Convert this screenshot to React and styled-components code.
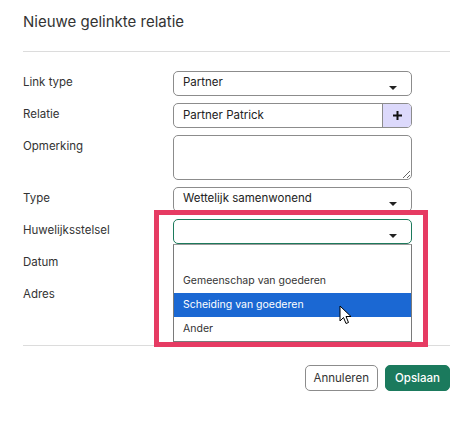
import React from 'react'
import styled, { createGlobalStyle } from 'styled-components'

const Global = createGlobalStyle`
  body {
    margin: 0;
    background: #fff;
    font-family: Inter, "Noto Sans", Arial, sans-serif;
    color: #333;
  }
`

const Dialog = styled.div`
  width: 475px;
  height: 428px;
  padding: 0 25px 0 23px;
  box-sizing: border-box;
`

const Header = styled.div`
  height: 51px;
  display: flex;
  align-items: center;
  border-bottom: 1px solid #dcdcdc;
  h1 {
    margin: 0 0 8px;
    font-size: 15px;
    font-weight: 400;
    color: #333;
  }
`

const Form = styled.div`
  display: grid;
  grid-template-columns: 150px 239px;
  row-gap: 7px;
  padding: 19px 0 37px;
  border-bottom: 1px solid #dcdcdc;
`

const Label = styled.div`
  font-size: 11.5px;
  line-height: 22px;
  color: #333;
`

const Field = styled.div`
  position: relative;
`

const SelectBox = styled.div`
  height: 25px;
  box-sizing: border-box;
  border: 1px solid ${p => (p.$focus ? '#1d7a5c' : '#8c8c8c')};
  border-radius: 5px;
  padding: 0 0 0 9px;
  font-size: 11.5px;
  line-height: 20px;
  color: #222;
  position: relative;
  &::after {
    content: '';
    position: absolute;
    right: 14px;
    top: 14px;
    border-left: 4px solid transparent;
    border-right: 4px solid transparent;
    border-top: 4px solid #222;
  }
`

const InputGroup = styled.div`
  display: flex;
  height: 25px;
  box-sizing: border-box;
  border: 1px solid #8c8c8c;
  border-radius: 5px;
  overflow: hidden;
`

const TextInput = styled.div`
  flex: 1;
  padding-left: 9px;
  font-size: 11.5px;
  line-height: 23px;
  color: #222;
`

const AddButton = styled.div`
  width: 28px;
  background: #dcd9fb;
  border-left: 1px solid #8c8c8c;
  display: flex;
  align-items: center;
  justify-content: center;
`

const TextArea = styled.textarea`
  display: block;
  width: 239px;
  height: 45px;
  box-sizing: border-box;
  border: 1px solid #8c8c8c;
  border-radius: 5px;
  margin: 0;
  resize: vertical;
  font-family: inherit;
`

const Empty = styled.div`
  height: 25px;
`

const List = styled.div`
  position: absolute;
  top: 25px;
  left: 0;
  width: 239px;
  box-sizing: border-box;
  border: 1px solid #7a7a7a;
  border-top-color: #9a9a9a;
  background: #fff;
  padding-top: 24px;
  z-index: 2;
`

const Option = styled.div`
  height: 24px;
  line-height: 24px;
  padding-left: 9px;
  font-size: 10.5px;
  background: ${p => (p.$active ? '#1b68d3' : '#fff')};
  color: ${p => (p.$active ? '#fff' : '#333')};
`

const Highlight = styled.div`
  position: absolute;
  left: -19px;
  top: -9px;
  width: 274px;
  height: 137px;
  box-sizing: border-box;
  border: 5px solid #e63b63;
  z-index: 3;
  pointer-events: none;
`

const Cursor = styled.svg`
  position: absolute;
  left: 166px;
  top: 86px;
  z-index: 4;
`

const Footer = styled.div`
  display: flex;
  justify-content: flex-end;
  gap: 7px;
  padding-top: 19px;
`

const Button = styled.button`
  height: 26px;
  padding: 0 ${p => (p.$primary ? '9px' : '8px')};
  border-radius: 5px;
  font-family: inherit;
  font-size: 11.5px;
  font-weight: ${p => (p.$primary ? 500 : 400)};
  border: 1px solid ${p => (p.$primary ? '#1b7a5d' : '#8c8c8c')};
  background: ${p => (p.$primary ? '#1b7a5d' : '#fff')};
  color: ${p => (p.$primary ? '#fff' : '#333')};
`

const options = ['Gemeenschap van goederen', 'Scheiding van goederen', 'Ander']

export default function App() {
  return (
    <Dialog>
      <Global />
      <Header>
        <h1>Nieuwe gelinkte relatie</h1>
      </Header>
      <Form>
        <Label>Link type</Label>
        <Field><SelectBox>Partner</SelectBox></Field>

        <Label>Relatie</Label>
        <Field>
          <InputGroup>
            <TextInput>Partner Patrick</TextInput>
            <AddButton>
              <svg width="9" height="9" viewBox="0 0 9 9">
                <path d="M3.5 0h2v3.5H9v2H5.5V9h-2V5.5H0v-2h3.5z" fill="#111" />
              </svg>
            </AddButton>
          </InputGroup>
        </Field>

        <Label>Opmerking</Label>
        <Field><TextArea /></Field>

        <Label>Type</Label>
        <Field><SelectBox>Wettelijk samenwonend</SelectBox></Field>

        <Label>Huwelijksstelsel</Label>
        <Field>
          <SelectBox $focus />
          <List>
            {options.map((o, i) => (
              <Option key={o} $active={i === 1}>{o}</Option>
            ))}
          </List>
          <Highlight />
          <Cursor width="13" height="20" viewBox="0 0 13 20">
            <path d="M1 1v15l3.5-3.5 2.5 6 2.5-1-2.5-6H12z" fill="#fff" stroke="#000" strokeWidth="1" strokeLinejoin="round" />
          </Cursor>
        </Field>

        <Label>Datum</Label>
        <Field><Empty /></Field>

        <Label>Adres</Label>
        <Field><Empty /></Field>
      </Form>
      <Footer>
        <Button>Annuleren</Button>
        <Button $primary>Opslaan</Button>
      </Footer>
    </Dialog>
  )
}
